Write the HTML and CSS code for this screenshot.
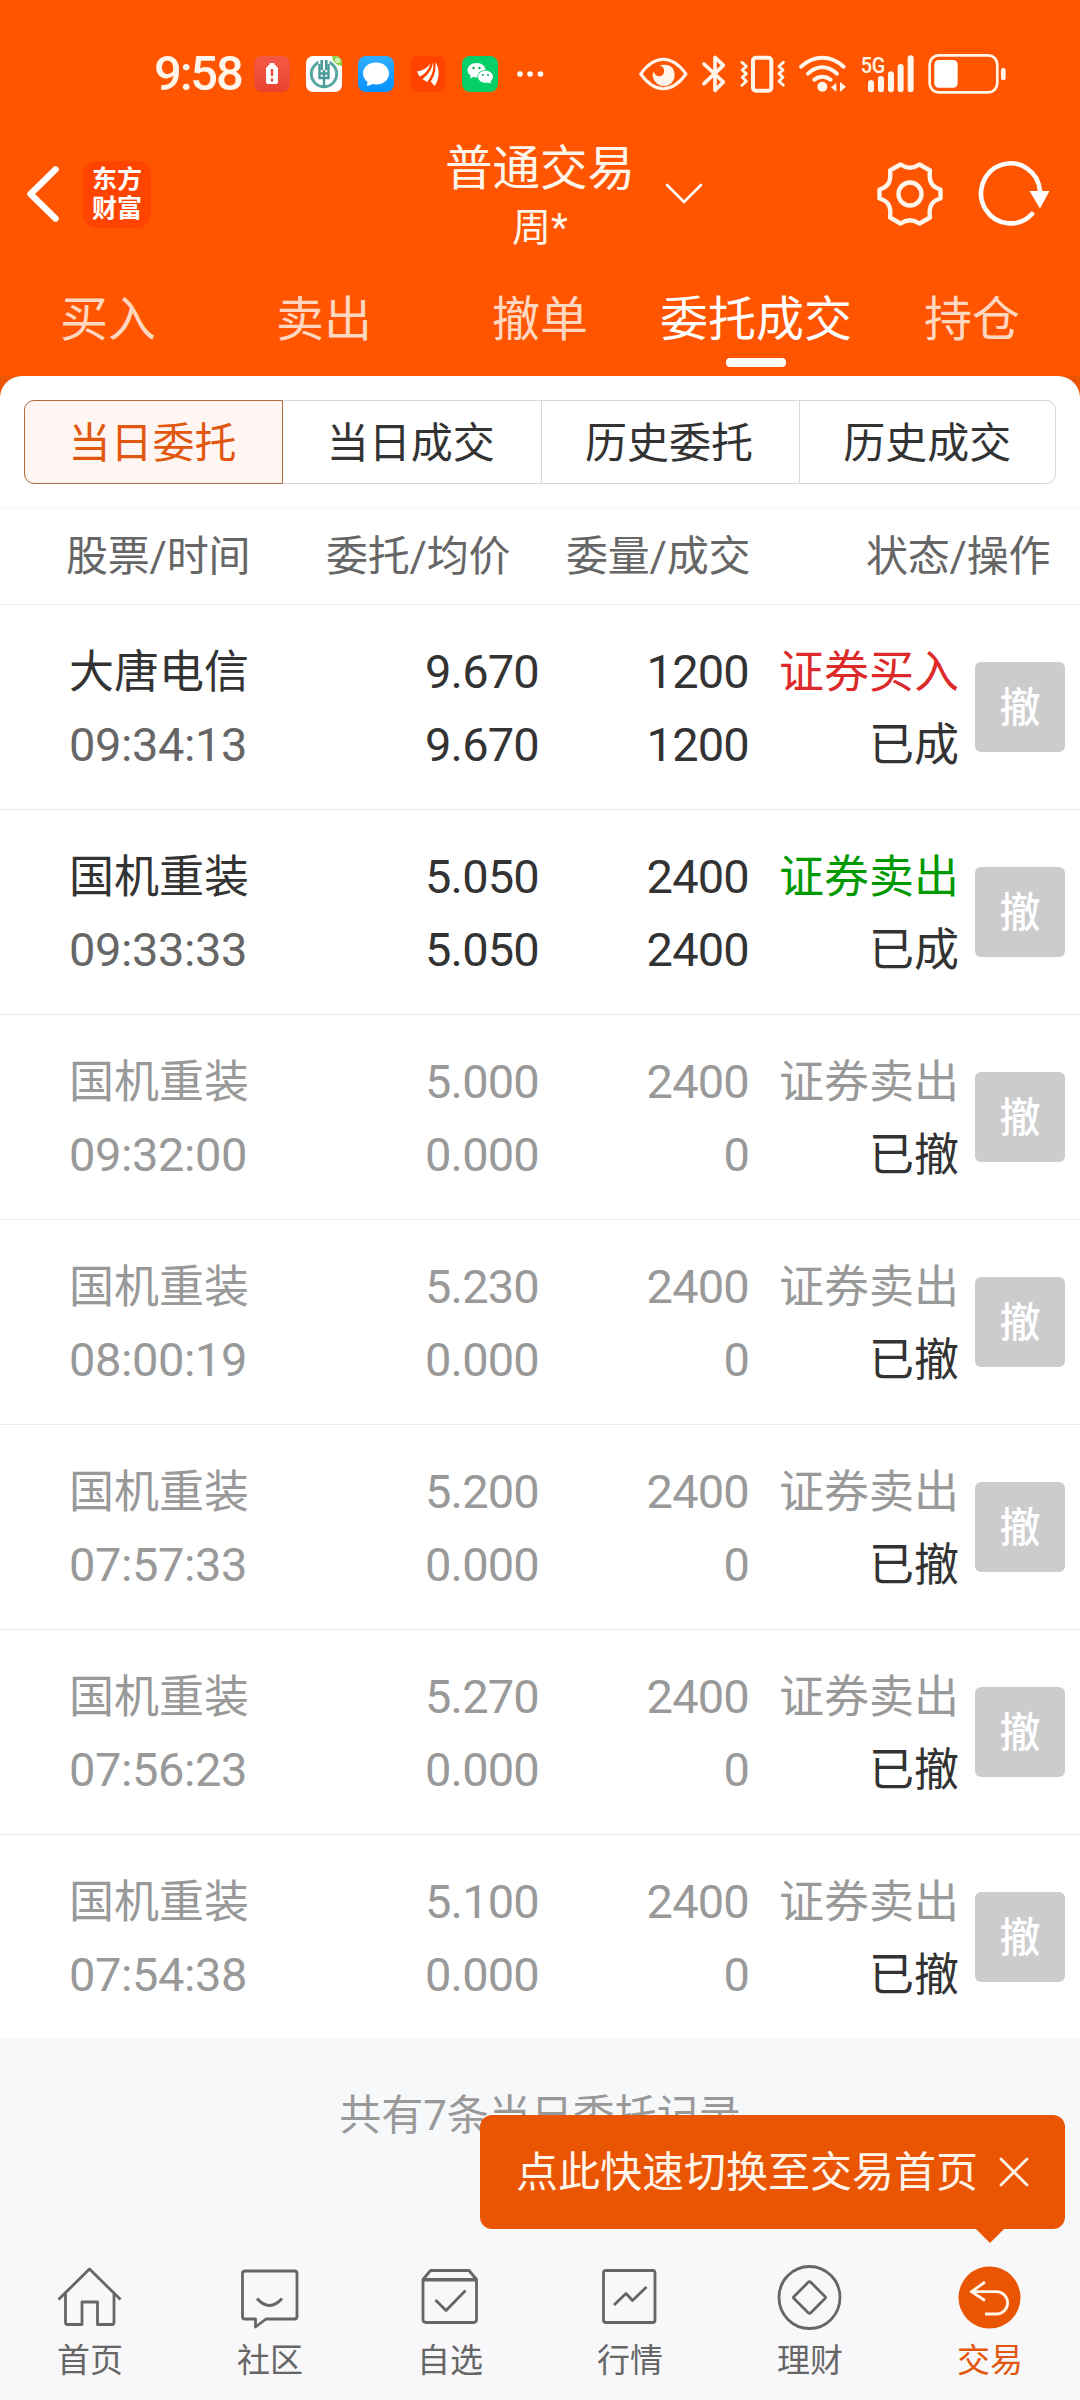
FILE: index.html
```html
<!DOCTYPE html>
<html lang="zh-CN">
<head>
<meta charset="utf-8">
<title>普通交易</title>
<link rel="stylesheet" href="styles.css">
</head>
<body>
<div class="app">
  <header class="header">
    <div class="status">
      <span class="clock">9:58</span>
      <div class="status-apps">
        <svg viewBox="0 0 36 36" width="36" height="36"><defs><linearGradient id="red" x2="0" y2="1"><stop stop-color="#f45a45"/><stop offset="1" stop-color="#e94230"/></linearGradient></defs><rect width="36" height="36" rx="8" fill="url(#red)"/><rect x="15.500" y="7" width="5" height="3" rx="1" fill="#fff"/><path d="M14.500 9h7l2.500 3v14a2 2 0 0 1-2 2h-8a2 2 0 0 1-2-2V12z" fill="#fff"/><path d="M18 13v7M18 22.500v3" stroke="#e94b36" stroke-width="2.400"/></svg>
        <svg viewBox="0 0 36 36" width="36" height="36"><rect width="36" height="36" rx="7" fill="#fff"/><path d="M26 0h3a7 7 0 0 1 7 7v3a10 10 0 0 1-10-10z" fill="#8fd14b"/><circle cx="31.500" cy="4.500" r="2.500" fill="#d4f3b4"/><circle cx="18" cy="18" r="12.700" fill="none" stroke="#55a5a0" stroke-width="3"/><path d="M18 3v14" stroke="#fff" stroke-width="11"/><path d="M15.700 4v10M20.300 4v10" stroke="#4a9b98" stroke-width="2.600"/><path d="M13.500 8v9.500h9V8M18 14v18M13.500 17.500v4.500h9v-4.500" stroke="#4a9b98" stroke-width="2.400" fill="none"/></svg>
        <svg viewBox="0 0 36 36" width="36" height="36"><defs><linearGradient id="blue" x2="0" y2="1"><stop stop-color="#32adff"/><stop offset="1" stop-color="#0591ff"/></linearGradient></defs><rect width="36" height="36" rx="8" fill="url(#blue)"/><path d="M18 6.500c7.500 0 13 4.800 13 11s-5.500 11-13 11q-2 0-3.600-.4-2.600 1.900-6 1.700 1.300-1.700 1.100-4C7 23.800 5 21 5 17.500c0-6.200 5.500-11 13-11z" fill="#fff"/></svg>
        <svg viewBox="0 0 36 36" width="36" height="36"><rect width="36" height="36" rx="8" fill="#ff4400"/><path d="M25.500 6c4 6 4.500 16-.8 24l-4-4.500C24 21 26 15 25.500 6zM23 6.500c1 6-.5 13-6 19.500l-4.500-3C18.500 18.500 22 13 23 6.500zM20.500 7.500C19 13 15.500 18 9.500 20.500L7 15.500C13 14.500 17.500 12 20.500 7.500z" fill="#fff"/></svg>
        <svg viewBox="0 0 36 36" width="36" height="36"><rect width="36" height="36" rx="8" fill="#07cf68"/><path d="M14.500 7C20 7 23.500 10.500 23.500 14c-5 0-8.500 3-8 7.500-2 .2-3.500-.2-4.500-.5L8 22.500l.7-3C6.500 18 5.500 16.200 5.500 14c0-3.500 3.500-7 9-7z" fill="#fff"/><path d="M23.500 14.800c4.500 0 7.500 2.700 7.500 6 0 1.800-1 3.400-2.500 4.500l.5 2.400-2.800-1.300c-5.600 1.400-10.200-1.600-10.200-5.600 0-3.300 3-6 7.500-6z" fill="#fff"/><g fill="#07a955"><circle cx="11.500" cy="12" r="1.200"/><circle cx="17.500" cy="12" r="1.200"/><circle cx="21" cy="19" r="1"/><circle cx="26" cy="19" r="1"/></g></svg>
      </div>
      <svg class="dots" viewBox="0 0 28 8" width="28" height="8" fill="#fff"><circle cx="4" cy="4" r="2.800"/><circle cx="14" cy="4" r="2.800"/><circle cx="24.500" cy="4" r="2.800"/></svg>
      <svg class="sys" viewBox="54 36 1108 126" width="369.3" height="42" fill="none" stroke="#fff5ea" stroke-linecap="round" stroke-linejoin="round">
        <path d="M62 99Q94 55 130 55T198 99Q166 143 130 143T62 99z" stroke-width="9"/>
        <path d="M119 73c30-8 45 8 45 29 0 19-14 33-32 33s-32-14-34-31c0-8 2-11 4-10 5 16 27 16 30 0 2-12-5-18-13-21z" fill="#fff5ea" stroke="none"/>
        <path d="M252 69l58 54-25 25V49l25 24-58 55" stroke-width="11"/>
        <rect x="399" y="50" width="55" height="99" rx="9" stroke-width="12"/>
        <path d="M366 64l13 12-12 11 12 11-12 11 12 12-13 12M490 64l-13 12 12 11-12 11 12 11-12 12 13 12" stroke-width="8.500"/>
        <path d="M543 77Q572 50 607 50T671 77M564 98Q584 79 607 79T651 98M583 116Q594 107 607 107T632 116" stroke-width="12"/>
        <circle cx="607" cy="137" r="15" fill="#fff5ea" stroke="none"/>
        <path d="M633 139l16-13v26zM678 137l-18-15v31z" fill="#fff5ea" stroke="none"/>
        <path d="M753 126v19M783 114v31M813 100v45M842 78v67M872 52v93" stroke-width="18"/>
        <rect x="929" y="43" width="203" height="111" rx="27" stroke-width="8"/>
        <rect x="943" y="57" width="70" height="83" rx="13" fill="#fff" stroke="none"/>
        <path d="M1150 88v23" stroke-width="14"/>
        <text class="net" x="722" y="97" textLength="74" lengthAdjust="spacingAndGlyphs">5G</text>
      </svg>
    </div>
    <div class="titlebar">
      <svg class="back" viewBox="0 0 34 58" width="34" height="58" fill="none" stroke="#fff" stroke-width="6.500" stroke-linecap="round" stroke-linejoin="round"><path d="M29.500 4.500L4.500 29l25 24.500"/></svg>
      <div class="brand"><span>东方</span><span>财富</span></div>
      <div class="account"><span class="title">普通交易</span><span class="user">周*</span></div>
      <svg class="caret" viewBox="0 0 38 22" width="38" height="22" fill="none" stroke="#fff" stroke-width="2.600" stroke-linecap="round"><path d="M2 2l17 17L36 2"/></svg>
      <svg class="gear" viewBox="0 0 68 68" width="68" height="68" fill="none" stroke="#fff5ea" stroke-width="4.400" stroke-linejoin="round"><path d="M14 10.500L24.500 4.500Q34 11 43.500 4.500L54 10.500C52.500 22 56 27 64.500 29.500V38.500C56 41 52.500 46 54 57.500L43.500 63.500Q34 57 24.500 63.500L14 57.500C15.500 46 12 41 3.500 38.500V29.500C12 27 15.500 22 14 10.500z"/><circle cx="34" cy="34" r="11.500"/></svg>
      <svg class="refresh" viewBox="0 0 72 68" width="72" height="68" fill="none"><path d="M62 31A29.500 30 0 1 0 54 54" stroke="#fff" stroke-width="4.600" stroke-linecap="round"/><path d="M51.500 31h20L62 48.500z" fill="#fff"/></svg>
    </div>
    <nav class="tabs">
      <a>买入</a><a>卖出</a><a>撤单</a><a class="active">委托成交</a><a>持仓</a>
    </nav>
  </header>

  <main class="panel-wrap">
    <div class="panel">
      <div class="segments">
        <span class="on">当日委托</span><span>当日成交</span><span>历史委托</span><span>历史成交</span>
      </div>
      <div class="cols head"><span>股票/时间</span><span>委托/均价</span><span>委量/成交</span><span>状态/操作</span></div>

      <div class="cols row"><div class="c"><b>大唐电信</b><i class="time">09:34:13</i></div><div class="c r"><i>9.670</i><i>9.670</i></div><div class="c r"><i>1200</i><i>1200</i></div><div class="c r"><b class="buy">证券买入</b><b>已成</b></div><span class="cancel">撤</span></div>
      <div class="cols row"><div class="c"><b>国机重装</b><i class="time">09:33:33</i></div><div class="c r"><i>5.050</i><i>5.050</i></div><div class="c r"><i>2400</i><i>2400</i></div><div class="c r"><b class="sell">证券卖出</b><b>已成</b></div><span class="cancel">撤</span></div>
      <div class="cols row off"><div class="c"><b>国机重装</b><i>09:32:00</i></div><div class="c r"><i>5.000</i><i>0.000</i></div><div class="c r"><i>2400</i><i>0</i></div><div class="c r"><b>证券卖出</b><b class="state">已撤</b></div><span class="cancel">撤</span></div>
      <div class="cols row off"><div class="c"><b>国机重装</b><i>08:00:19</i></div><div class="c r"><i>5.230</i><i>0.000</i></div><div class="c r"><i>2400</i><i>0</i></div><div class="c r"><b>证券卖出</b><b class="state">已撤</b></div><span class="cancel">撤</span></div>
      <div class="cols row off"><div class="c"><b>国机重装</b><i>07:57:33</i></div><div class="c r"><i>5.200</i><i>0.000</i></div><div class="c r"><i>2400</i><i>0</i></div><div class="c r"><b>证券卖出</b><b class="state">已撤</b></div><span class="cancel">撤</span></div>
      <div class="cols row off"><div class="c"><b>国机重装</b><i>07:56:23</i></div><div class="c r"><i>5.270</i><i>0.000</i></div><div class="c r"><i>2400</i><i>0</i></div><div class="c r"><b>证券卖出</b><b class="state">已撤</b></div><span class="cancel">撤</span></div>
      <div class="cols row off"><div class="c"><b>国机重装</b><i>07:54:38</i></div><div class="c r"><i>5.100</i><i>0.000</i></div><div class="c r"><i>2400</i><i>0</i></div><div class="c r"><b>证券卖出</b><b class="state">已撤</b></div><span class="cancel">撤</span></div>
    </div>
  </main>

  <p class="summary">共有7条当日委托记录</p>

  <footer class="bottom">
    <div class="tip"><span>点此快速切换至交易首页</span><svg viewBox="0 0 30 30" width="30" height="30" fill="none" stroke="#fff5ea" stroke-width="2.800" stroke-linecap="round"><path d="M2 2l26 26M28 2L2 28"/></svg></div>
    <a><svg viewBox="0 0 68 68" width="68" height="68"><path d="M2.500 33.500L33.500 3L64.500 33.500"/><path d="M9.500 27.500V56.500q0 2 2 2H26V36H41.500V58.500H56q2 0 2-2V27.500"/></svg><span>首页</span></a>
    <a><svg viewBox="0 0 68 68" width="68" height="68"><path d="M9 5H58.500q2.500 0 2.500 2.500V50.500q0 2.500-2.500 2.500H30L19.500 61V53H9q-2.500 0-2.500-2.500V7.500q0-2.500 2.500-2.500z"/><path d="M21 32.500q12.500 14 25 0" stroke-width="3"/></svg><span>社区</span></a>
    <a><svg viewBox="0 0 68 68" width="68" height="68"><path d="M7 13.500L14.500 4.500H53L60.500 13.500V53.500q0 3-3 3H10q-3 0-3-3zH60.500"/><path d="M7 14H60.500M19.500 34L30 44.500L49.500 24.500"/></svg><span>自选</span></a>
    <a><svg viewBox="0 0 68 68" width="68" height="68"><rect x="7.500" y="4.500" width="51.500" height="52" rx="2.500"/><path d="M18 39L30 27.500L36.500 34.500L50.500 21"/></svg><span>行情</span></a>
    <a><svg viewBox="0 0 68 68" width="68" height="68"><ellipse cx="33.500" cy="31.500" rx="30.500" ry="31"/><path d="M32.200 16.300q1.300-1.300 2.600 0L49 30.500q1 1 0 2L34.800 46.700q-1.300 1.300-2.600 0L18 32.500q-1-1 0-2z"/></svg><span>理财</span></a>
    <a class="active"><svg viewBox="0 0 68 68" width="68" height="68"><circle cx="33.500" cy="31.500" r="31"/><path d="M29 16L15.500 25.700L29 34.500M16 25.700H40.500A11 11 0 0 1 40.500 48H29"/></svg><span>交易</span></a>
  </footer>
</div>
</body>
</html>
```
FILE: styles.css
```css
* { box-sizing: border-box; }
body { margin: 0; font-family: Roboto, "Noto Sans CJK SC", sans-serif; color: #333; background: #f7f8fa; }
b, i { font-weight: 400; font-style: normal; }
svg { display: block; flex: none; }
.app { width: 1080px; height: 2400px; display: flex; flex-direction: column; overflow: hidden; }

.header { height: 376px; background: #ff5500; color: #fff; display: flex; flex-direction: column; flex: none; }
.status { height: 130px; display: flex; align-items: center; padding: 18px 0 0 154px; }
.clock { width: 100px; font-size: 49px; line-height: 60px; letter-spacing: -2.2px; color: #fff5ea; font-weight: 500; }
.status-apps { display: flex; gap: 16px; }
.dots { margin-left: 18px; }
.sys { margin-left: 94px; }
.net { font: 500 67px Roboto, sans-serif; fill: #fff5ea; stroke: none; }

.titlebar { height: 128px; display: flex; align-items: center; padding-left: 26px; }
.brand { margin-left: 23px; width: 68px; height: 67px; border-radius: 14px; background: #ff4400; display: flex; flex-direction: column; align-items: center; justify-content: center; font-size: 25px; line-height: 29px; font-weight: 700; }
.account { margin-left: 284px; width: 210px; padding-top: 8px; display: flex; flex-direction: column; align-items: center; color: #fff5ea; }
.title { font-size: 47.500px; line-height: 61px; }
.user { font-size: 39px; line-height: 57px; }
.caret { margin-left: 20px; }
.gear { margin-left: 173px; }
.refresh { margin-left: 34px; }

.tabs { height: 118px; display: grid; grid-template-columns: repeat(5, 216px); }
.tabs a { display: flex; flex-direction: column; align-items: center; padding-top: 32px; font-size: 48px; line-height: 60px; color: #ffd6bf; white-space: nowrap; }
.tabs .active { color: #fff; }
.tabs .active::after { content: ""; width: 60px; height: 9px; border-radius: 4px; background: #fff; margin-top: 8px; }

.panel-wrap { height: 1663px; background: linear-gradient(#e95504 40px, #fff 40px); flex: none; }
.panel { height: 1663px; background: #fff; border-radius: 22px 22px 0 0; padding-top: 24px; }
.segments { display: flex; margin: 0 24px; height: 84px; width: 1032px; }
.segments span { flex: 1; border: 1px solid #d8d8d8; border-left-width: 0; display: flex; align-items: center; justify-content: center; font-size: 42px; padding: 0 2px 5px 0; }
.segments span:last-child { border-radius: 0 10px 10px 0; padding-right: 0; }
.segments .on { border: 1px solid #b06a3c; border-radius: 10px 0 0 10px; background: #fff6f3; color: #e2570e; }

.cols { display: grid; }
.head { height: 98px; margin-top: 23px; border-top: 1px solid #f7f7f7; border-bottom: 1px solid #ebebeb; grid-template-columns: 260px 240px 300px 190px; padding-left: 66px; font-size: 42px; line-height: 98px; letter-spacing: -.2px; color: #666; white-space: nowrap; }
.row { height: 205px; grid-template-columns: 230px 240px 210px 210px 107px; padding-left: 69px; border-bottom: 1px solid #ebebeb; }
.row:last-child { border-bottom: 0; }
.c { display: flex; flex-direction: column; padding-top: 30px; font-size: 45px; line-height: 73px; white-space: nowrap; }
.c b { position: relative; top: 1px; }
.c i { font-size: 47px; letter-spacing: -.4px; }
.r { align-items: flex-end; }
.r i { letter-spacing: -.8px; }
.time { color: #666; }
.buy { color: #dc2a2a; }
.sell { color: #009900; }
.off { color: #999; }
.off .state { color: #333; }
.cancel { margin: 57px 0 0 16px; width: 90px; height: 90px; border-radius: 6px; background: #ccc; color: #fff; font-size: 41px; font-weight: 500; line-height: 92px; text-align: center; }

.summary { margin: 0; height: 200px; padding-top: 45px; text-align: center; font-size: 42px; line-height: 64px; color: #999; flex: none; }

.bottom { position: relative; height: 161px; display: grid; grid-template-columns: repeat(6, 180px); background: #f8f8fa; }
.bottom a { display: flex; flex-direction: column; align-items: center; padding-top: 27px; font-size: 33px; line-height: 44px; color: #666; }
.bottom svg { overflow: visible; }
.bottom a svg { fill: none; stroke: #666; stroke-width: 2.800; stroke-linejoin: round; }
.bottom a span { margin-top: 5px; }
.bottom .active { color: #e2570e; }
.bottom .active circle { fill: #ea5504; stroke: none; }
.bottom .active path { stroke: #fff5ea; stroke-linejoin: miter; }
.tip { position: absolute; left: 480px; top: -124px; width: 585px; height: 114px; border-radius: 12px; background: #ea5504; color: #fff5ea; display: flex; align-items: center; padding: 0 0 7px 36px; font-size: 42px; white-space: nowrap; }
.tip svg { margin-left: 21px; margin-top: 7px; }
.tip::after { content: ""; position: absolute; left: 495px; top: 113px; border: 15px solid transparent; border-top-color: #ea5504; border-bottom: 0; }
```
